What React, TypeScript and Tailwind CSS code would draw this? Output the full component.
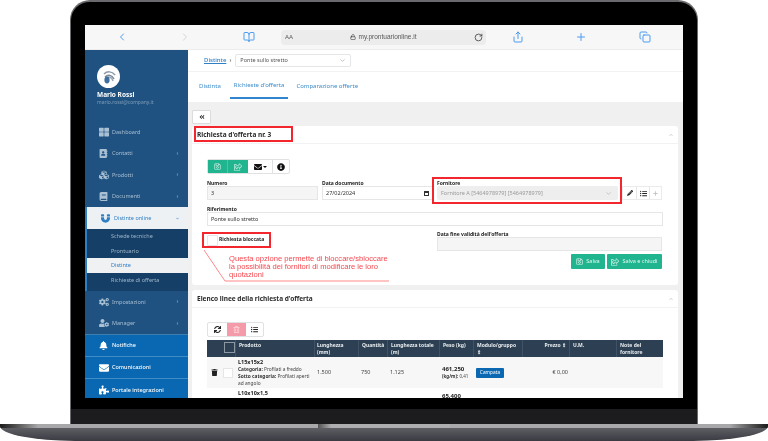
import {
  FaAddressBook,
  FaAngleDoubleLeft,
  FaBell,
  FaBook,
  FaChevronDown,
  FaChevronRight,
  FaChevronUp,
  FaCogs,
  FaCubes,
  FaEnvelope,
  FaInfoCircle,
  FaListUl,
  FaMagnet,
  FaPencilAlt,
  FaPlus,
  FaPuzzlePiece,
  FaRegSave,
  FaRegShareSquare,
  FaRegTrashAlt,
  FaSync,
  FaThLarge,
  FaTrash,
  FaUserCog,
} from "react-icons/fa";
import { ChevronDown, ChevronLeft, ChevronRight, BookOpen, Copy, Lock, Plus, RotateCw, Share } from "lucide-react";
import type { ReactNode } from "react";

const mainMenu = [
  { label: "Dashboard", icon: <FaThLarge size={10} /> },
  { label: "Contatti", icon: <FaAddressBook size={9} />, arrow: true },
  { label: "Prodotti", icon: <FaCubes size={10} />, arrow: true },
  { label: "Documenti", icon: <FaBook size={9} />, arrow: true },
];

const blueMenu = [
  { label: "Notifiche", icon: <FaBell size={9} /> },
  { label: "Comunicazioni", icon: <FaEnvelope size={10} /> },
  { label: "Portale integrazioni", icon: <FaPuzzlePiece size={10} /> },
];

function MenuRow({ label, icon, arrow }: { label: string; icon: ReactNode; arrow?: boolean }) {
  return (
    <div className="flex h-[21.5px] shrink-0 items-center pl-[12px] pr-[9px] text-[5.5px] text-[#a9bfd3]">
      <span className="flex w-[13px] justify-center">{icon}</span>
      <span className="ml-[2px] flex-1">{label}</span>
      {arrow && <FaChevronRight size={3} />}
    </div>
  );
}

function Sidebar() {
  return (
    <aside className="flex w-[103px] shrink-0 flex-col overflow-hidden bg-[#1f5280]">
      <div className="h-[71px] shrink-0 pl-[12px] pt-[15px]">
        <svg width="23" height="23" viewBox="0 0 23 23">
          <circle cx="11.5" cy="11.5" r="11.5" fill="#fff" />
          <path d="M7 9c3-3 8-3 11 1" fill="none" stroke="#8e9aa6" strokeWidth="1.5" />
          <path d="M8 12c3-3 7-2 9 2" fill="none" stroke="#7b8a99" strokeWidth="1.5" />
          <path d="M10 13c2-2 5-1 6 3" fill="none" stroke="#9aa8b5" strokeWidth="1.5" />
          <ellipse cx="10" cy="15" rx="2.6" ry="3.4" fill="#3f6f9f" />
        </svg>
        <p className="mt-[2px] text-[6.5px] font-bold leading-[9px] text-white">Mario Rossi</p>
        <p className="text-[5px] leading-[6px] text-[#7f9db9]">mario.rossi@company.it</p>
      </div>
      <div className="shrink-0">
        {mainMenu.map((item) => (
          <MenuRow key={item.label} {...item} />
        ))}
      </div>
      <div className="flex h-[22px] shrink-0 items-center border-l-[2px] border-[#2f7fc4] bg-[#eef1f4] pl-[12px] pr-[9px] text-[5.5px] text-[#2f7fc4]">
        <span className="flex w-[13px] justify-center">
          <FaMagnet size={9} />
        </span>
        <span className="ml-[2px] flex-1">Distinte online</span>
        <FaChevronDown size={3} />
      </div>
      <div className="flex h-[62px] shrink-0 flex-col border-l-[2px] border-[#2f7fc4] bg-[#153f66] text-[5.5px] text-[#9fb6cb]">
        <div className="flex h-[15px] items-center pl-[24px]">Schede tecniche</div>
        <div className="flex h-[14px] items-center pl-[24px]">Prontuario</div>
        <div className="flex h-[15px] items-center bg-[#f0f1f3] pl-[24px] text-[#2f7fc4]">Distinte</div>
        <div className="flex h-[15px] items-center pl-[24px]">Richieste di offerta</div>
      </div>
      <div className="h-[44px] shrink-0 border-b-[1px] border-[#3f7fae]">
        <MenuRow label="Impostazioni" icon={<FaCogs size={10} />} arrow />
        <MenuRow label="Manager" icon={<FaUserCog size={10} />} arrow />
      </div>
      <div className="flex-1 bg-[#0a68b3]">
        {blueMenu.map((item) => (
          <div
            key={item.label}
            className="flex h-[22px] items-center border-b-[1px] border-[#3f8cc6] pl-[12px] text-[5.5px] font-medium text-white last:border-b-0"
          >
            <span className="flex w-[13px] justify-center">{item.icon}</span>
            <span className="ml-[2px]">{item.label}</span>
          </div>
        ))}
      </div>
    </aside>
  );
}

function Field({ label, value, className, inputClass }: { label: string; value?: string; className?: string; inputClass?: string }) {
  return (
    <div className={className}>
      <div className="text-[5px] font-bold leading-[6px] text-[#222]">{label}</div>
      <div className={`flex h-[14px] items-center border border-[#e4e6e8] px-[3px] text-[5.5px] text-[#333] ${inputClass ?? ""}`}>
        {value}
      </div>
    </div>
  );
}

function CardHeader({ children }: { children: ReactNode }) {
  return (
    <div className="flex h-[18px] items-center justify-between border-b border-[#f1f2f3] pl-[5px] pr-[5px]">
      <div className="text-[6.5px] font-bold text-[#2a2a2a]">{children}</div>
      <FaChevronUp size={4} className="text-[#c9cdd1]" />
    </div>
  );
}

function RequestCard() {
  return (
    <section className="relative h-[159px] shrink-0 rounded-[3px] bg-white">
      <CardHeader>Richiesta d'offerta nr. 3</CardHeader>
      <div className="absolute left-[2px] top-0 h-[16px] w-[99px] border-[2px] border-[#f2262c]" />
      <div className="px-[15px] pt-[15px]">
        <div className="flex h-[15px] w-[83px] rounded-[2px] border border-[#dfe1e3] text-[#111]">
          <div className="flex w-[20px] items-center justify-center border-r border-[#4cc5a6] bg-[#20b58f] text-[#d6f3ea]">
            <FaRegSave size={7} />
          </div>
          <div className="flex w-[20px] items-center justify-center bg-[#20b58f] text-[#d6f3ea]">
            <FaRegShareSquare size={8} />
          </div>
          <div className="flex w-[25px] items-center justify-center gap-[1px] border-r border-[#dfe1e3]">
            <FaEnvelope size={8} />
            <span className="mt-[1px] h-0 w-0 border-x-[2px] border-t-[2px] border-x-transparent border-t-[#111]" />
          </div>
          <div className="flex flex-1 items-center justify-center">
            <FaInfoCircle size={8} />
          </div>
        </div>
        <div className="mt-[6px] flex">
          <Field label="Numero" value="3" className="w-[111px]" inputClass="bg-[#f5f5f5]" />
          <div className="ml-[4px] w-[111px]">
            <div className="text-[5px] font-bold leading-[6px] text-[#222]">Data documento</div>
            <div className="flex h-[14px] items-center justify-between border border-[#e4e6e8] px-[3px] text-[5.5px] text-[#333]">
              27/02/2024
              <span className="h-[5px] w-[5px] border border-t-[2px] border-[#333]" />
            </div>
          </div>
          <div className="relative ml-[4px] w-[181px]">
            <div className="absolute -left-[5px] -top-[3px] h-[27px] w-[190px] border-[2px] border-[#f2262c]" />
            <div className="text-[5px] font-bold leading-[6px] text-[#222]">Fornitore</div>
            <div className="flex h-[14px] items-center justify-between rounded-[2px] bg-[#eeeeee] pl-[4px] pr-[6px] text-[5.5px] text-[#9a9a9a]">
              Fornitore A [5464978979] [5464978979]
              <ChevronDown size={7} className="text-[#aaa]" />
            </div>
          </div>
          <div className="ml-[4px] mt-[6px] flex h-[14px] w-[40px] border border-[#e9ebec] text-[#222]">
            <div className="flex w-[13px] items-center justify-center">
              <FaPencilAlt size={6} />
            </div>
            <div className="flex w-[14px] items-center justify-center border-x border-[#e4e6e8]">
              <FaListUl size={7} />
            </div>
            <div className="flex flex-1 items-center justify-center text-[#c4c7ca]">
              <FaPlus size={5} />
            </div>
          </div>
        </div>
        <Field label="Riferimento" value="Ponte sullo stretto" className="mt-[6px]" />
        <div className="mt-[5px] flex">
          <div className="mt-[1px] h-[16px] w-[69px] -translate-x-[5px] border-[2px] border-[#f2262c]">
            <div className="flex h-full items-center gap-[1px] pl-[3px] text-[5px] font-bold text-[#222]">
              <span className="h-[11px] w-[11px] shrink-0 rounded-[1px] border border-[#e4e6e8] bg-white" />
              Richiesta bloccata
            </div>
          </div>
          <div className="ml-[161px] w-[225px]">
            <Field label="Data fine validità dell'offerta" inputClass="bg-[#f5f5f5]" />
            <div className="mt-[3px] flex justify-end gap-[2px] text-[5.5px] text-[#e4f7f1]">
              <div className="flex h-[15px] w-[34px] items-center justify-center gap-[3px] rounded-[1px] bg-[#20b58f]">
                <FaRegSave size={7} />
                Salva
              </div>
              <div className="flex h-[15px] w-[55px] items-center justify-center gap-[3px] rounded-[1px] bg-[#20b58f]">
                <FaRegShareSquare size={8} />
                Salva e chiudi
              </div>
            </div>
          </div>
        </div>
      </div>
      {/* annotazione rossa sopra al form */}
      <svg className="absolute left-[10px] top-[122px]" width="200" height="36" viewBox="0 0 200 36">
        <path d="M2 2 L23 33 H187" fill="none" stroke="#ff6b6b" strokeWidth="0.8" />
      </svg>
      <p className="absolute left-[37px] top-[129px] w-[165px] font-['Liberation_Sans',sans-serif] text-[7.6px] leading-[8px] text-[#f4484f]">
        Questa opzione permette di bloccare/sbloccare la possibilità dei fornitori di modificare le loro quotazioni
      </p>
    </section>
  );
}

const heads = ["", "Prodotto", "Lunghezza (mm)", "Quantità", "Lunghezza totale (m)", "Peso (kg)", "Modulo/gruppo ⇕", "Prezzo ⇕", "U.M.", "Note del fornitore"];
const cols = "grid grid-cols-[29px_79px_44px_29px_52px_34px_49px_47px_47px_45px]";

function LinesCard() {
  return (
    <section className="mt-[5px] flex-1 rounded-t-[3px] bg-white">
      <CardHeader>Elenco linee della richiesta d'offerta</CardHeader>
      <div className="px-[15px] pt-[14px]">
        <div className="flex h-[15px] w-[57px] rounded-[2px] border border-[#dfe1e3] text-[#222]">
          <div className="flex w-[19px] items-center justify-center">
            <FaSync size={7} />
          </div>
          <div className="flex w-[19px] items-center justify-center bg-[#f59aa8] text-[#fbd7dc]">
            <FaRegTrashAlt size={7} />
          </div>
          <div className="flex flex-1 items-center justify-center">
            <FaListUl size={7} />
          </div>
        </div>
        <div className={`${cols} mt-[3px] h-[17px] bg-[#2d4053] text-[5px] font-bold leading-[7px] text-[#e8ecef]`}>
          {heads.map((h, i) => (
            <div
              key={i}
              className={`border-r border-[#3f5266] px-[3px] pt-[2px] last:border-r-0 ${i === 2 ? "pl-[2px]" : ""} ${i === 7 ? "text-right" : ""}`}
            >
              {i === 0 ? <span className="ml-[14px] block h-[11px] w-[11px] border border-[#8c99a5]" /> : h}
            </div>
          ))}
        </div>
        <div className={`${cols} h-[31px] items-center bg-[#f7f7f7] text-[5.5px] text-[#444]`}>
          <div className="flex items-center gap-[5px] pl-[4px]">
            <FaTrash size={7} className="text-[#222]" />
            <span className="h-[10px] w-[10px] border border-[#e4e6e8] bg-white" />
          </div>
          <div className="pl-[2px] text-[4.8px] leading-[7px]">
            <div className="text-[5.5px] font-bold leading-[8px] text-[#222]">L15x15x2</div>
            <div><b className="text-[#333]">Categoria:</b> Profilati a freddo</div>
            <div><b className="text-[#333]">Sotto categoria:</b> Profilati aperti ad angolo</div>
          </div>
          <div className="pl-[2px]">1.500</div>
          <div className="pl-[2px]">750</div>
          <div className="pl-[2px]">1.125</div>
          <div className="pl-[2px]">
            <div className="text-[6px] font-bold leading-[7px] text-[#222]">461,250</div>
            <div className="whitespace-nowrap text-[4.5px] leading-[6px]"><b className="text-[#333]">(kg/m):</b> 0,41</div>
          </div>
          <div className="pl-[2px]">
            <span className="inline-flex h-[10px] w-[28px] items-center justify-center rounded-[1px] bg-[#0a68b3] text-[4.8px] text-white">
              Campata
            </span>
          </div>
          <div className="pr-[2px] text-right">€ 0,00</div>
          <div />
          <div />
        </div>
        <div className={`${cols} h-[11px] text-[5.5px] text-[#222]`}>
          <div />
          <div className="pl-[2px] pt-[1px] font-bold">L10x10x1,5</div>
          <div />
          <div />
          <div />
          <div className="pl-[2px] pt-[4px] text-[6px] font-bold">65,400</div>
        </div>
      </div>
    </section>
  );
}

function Content() {
  return (
    <main className="flex min-w-0 flex-1 flex-col bg-[#f0f0f0]">
      <div className="flex h-[22px] shrink-0 items-center gap-[3px] border-b border-[#f1f2f3] bg-white pl-[16px] text-[5.5px]">
        <span className="text-[6px] font-medium text-[#2f7fc4] underline">Distinte</span>
        <FaChevronRight size={3} className="text-[#333]" />
        <div className="flex h-[13px] w-[116px] items-center justify-between rounded-[2px] border border-[#e4e6e8] px-[4px] text-[#555]">
          Ponte sullo stretto
          <ChevronDown size={7} className="text-[#999]" />
        </div>
      </div>
      <div className="flex h-[30px] shrink-0 items-end gap-[6px] bg-white pb-[3px] pl-[8px] text-[6px] text-[#3d8bc9]">
        <div className="px-[3px] pb-[8px]">Distinta</div>
        <div className="border-b-[2px] border-[#2f86cf] px-[4px] pb-[7px]">Richieste d'offerta</div>
        <div className="px-[2px] pb-[8px]">Comparazione offerte</div>
      </div>
      <div className="flex flex-1 flex-col overflow-hidden pl-[4px] pr-[5px] pt-[8px]">
        <div className="mb-[2px] flex h-[14px] w-[19px] shrink-0 items-center justify-center rounded-[1px] border border-[#dcdcdc] bg-white text-[#222]">
          <FaAngleDoubleLeft size={6} />
        </div>
        <RequestCard />
        <LinesCard />
      </div>
    </main>
  );
}

function BrowserBar() {
  return (
    <div className="flex h-[25px] shrink-0 items-center border-b border-[#ececec] bg-[#f7f7f7] text-[#4a9bf0]">
      <ChevronLeft size={12} className="ml-[31px]" />
      <ChevronRight size={12} className="ml-[51px] text-[#d4d4d4]" />
      <BookOpen size={12} className="ml-[52px]" />
      <div className="ml-[26px] flex h-[15px] w-[205px] items-center rounded-[4px] bg-[#ececec] pl-[4px] pr-[3px] font-['Liberation_Sans',sans-serif] text-[#555]">
        <span className="text-[6px]">AA</span>
        <div className="flex flex-1 items-center justify-center gap-[2px] text-[6.5px]">
          <Lock size={6} className="text-[#222]" />
          my.prontuarionline.it
        </div>
        <RotateCw size={9} className="text-[#333]" />
      </div>
      <Share size={12} className="ml-[26px]" />
      <Plus size={12} className="ml-[51px]" />
      <Copy size={12} className="ml-[52px]" />
    </div>
  );
}

export default function App() {
  return (
    <div className="flex h-[441px] w-[768px] flex-col items-center overflow-hidden bg-white font-['Noto_Sans',sans-serif] blur-[0.35px]">
      {/* coperchio del laptop */}
      <div className="flex h-[424px] w-[628px] shrink-0 flex-col rounded-t-[20px] border-x-[1px] border-t-[2px] border-[#6a6a6e] bg-black">
        <div className="mx-[14px] mt-[23px] flex h-[373px] shrink-0 flex-col overflow-hidden bg-white">
          <BrowserBar />
          <div className="flex min-h-0 flex-1">
            <Sidebar />
            <Content />
          </div>
        </div>
        <div className="mt-[11px] h-[15px] bg-[#1c1c1e]" />
      </div>
      {/* base */}
      <div className="flex h-[17px] w-[768px] shrink-0 flex-col overflow-hidden rounded-b-[75px_15px] bg-linear-to-b from-[#6a6a70] to-[#3a3a42]">
        <div className="flex h-[4px] shrink-0">
          <div className="flex-1 bg-linear-to-r from-[#1c1c1c] from-0% to-[#a8a8aa] to-12%" />
          <div className="w-[132px] bg-linear-to-r from-[#555] via-[#aeaeb0] via-10% to-[#aeaeb0] to-95%" />
          <div className="flex-1 bg-linear-to-l from-[#1c1c1c] from-0% to-[#a8a8aa] to-12%" />
        </div>
      </div>
    </div>
  );
}
